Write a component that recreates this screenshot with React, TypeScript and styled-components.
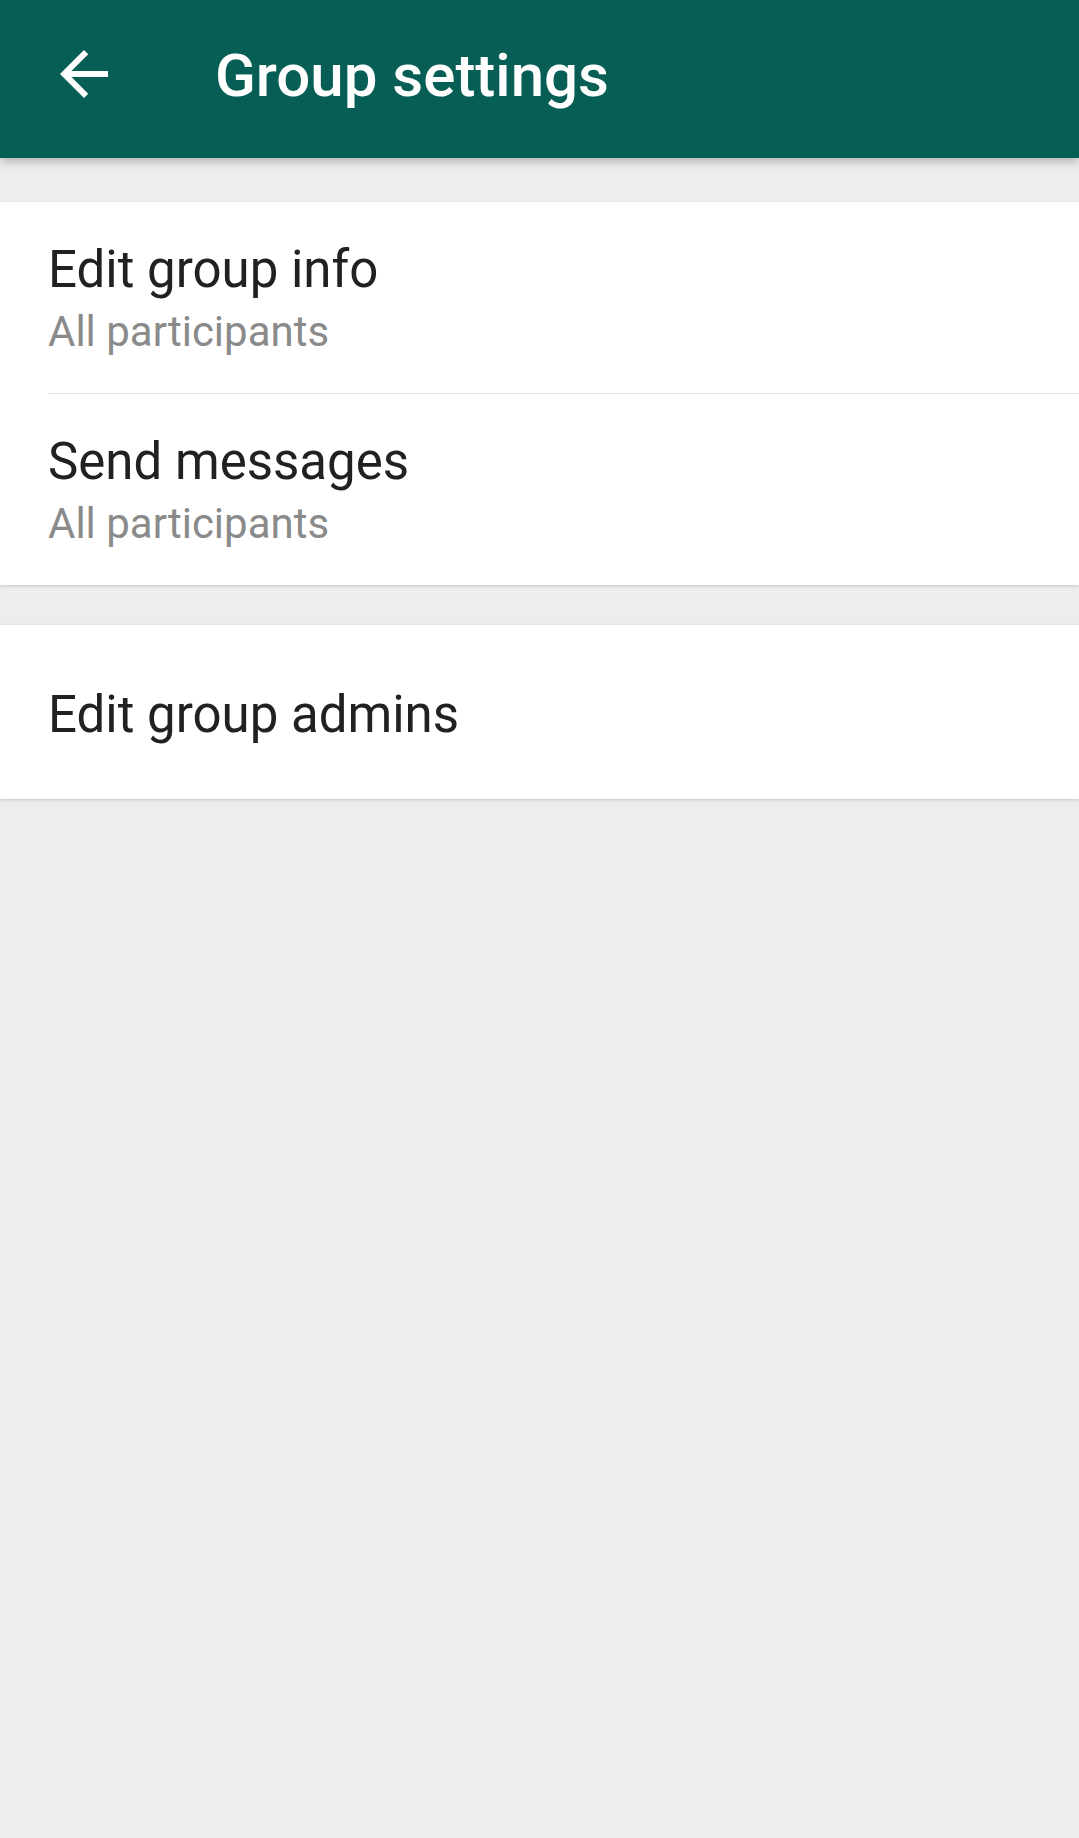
import styled, { createGlobalStyle } from 'styled-components'

const GlobalStyle = createGlobalStyle`
  html, body {
    margin: 0;
    padding: 0;
    background: #ededed;
  }
  body {
    font-family: Roboto, 'Noto Sans', 'Liberation Sans', sans-serif;
    -webkit-font-smoothing: antialiased;
  }
`

const Page = styled.div`
  min-height: 1838px;
  background: #ededed;
`

const AppBar = styled.header`
  position: relative;
  z-index: 2;
  display: flex;
  align-items: flex-start;
  height: 158px;
  box-sizing: border-box;
  padding: 38px 0 0 48px;
  background: #075e54;
  box-shadow: 0 3px 10px rgba(0, 0, 0, 0.28);
`

const BackButton = styled.button`
  display: flex;
  align-items: center;
  justify-content: center;
  width: 72px;
  height: 72px;
  padding: 0;
  border: none;
  background: transparent;
  cursor: pointer;
`

const Title = styled.h1`
  margin: 4px 0 0 95px;
  font-size: 60px;
  line-height: 68px;
  font-weight: 500;
  color: #ffffff;
`

const Card = styled.section<{ $gap: number }>`
  margin-top: ${(props) => props.$gap}px;
  background: #ffffff;
  box-shadow: 0 1px 3px rgba(0, 0, 0, 0.18);
`

const Item = styled.div<{ $divider?: boolean }>`
  margin-left: 48px;
  padding: 38px 0 36px 0;
  border-bottom: ${(props) => (props.$divider ? '1px solid #e2e2e2' : 'none')};
  cursor: pointer;
`

const SingleItem = styled.div`
  padding: 60px 0 54px 48px;
  cursor: pointer;
`

const ItemTitle = styled.div`
  font-size: 51px;
  line-height: 60px;
  color: #212121;
`

const ItemSubtitle = styled.div`
  margin-top: 7px;
  font-size: 42px;
  line-height: 50px;
  color: #8a8a8a;
`

const BackArrow = () => (
  <svg width="72" height="72" viewBox="0 0 24 24" fill="#ffffff">
    <path d="M20 11H7.83l5.59-5.59L12 4l-8 8 8 8 1.41-1.41L7.83 13H20v-2z" />
  </svg>
)

const settings = [
  { title: 'Edit group info', value: 'All participants' },
  { title: 'Send messages', value: 'All participants' },
]

const App = () => {
  return (
    <Page>
      <GlobalStyle />
      <AppBar>
        <BackButton aria-label="Back">
          <BackArrow />
        </BackButton>
        <Title>Group settings</Title>
      </AppBar>
      <Card $gap={44}>
        {settings.map((item, i) => (
          <Item key={item.title} $divider={i < settings.length - 1}>
            <ItemTitle>{item.title}</ItemTitle>
            <ItemSubtitle>{item.value}</ItemSubtitle>
          </Item>
        ))}
      </Card>
      <Card $gap={40}>
        <SingleItem>
          <ItemTitle>Edit group admins</ItemTitle>
        </SingleItem>
      </Card>
    </Page>
  )
}

export default App
